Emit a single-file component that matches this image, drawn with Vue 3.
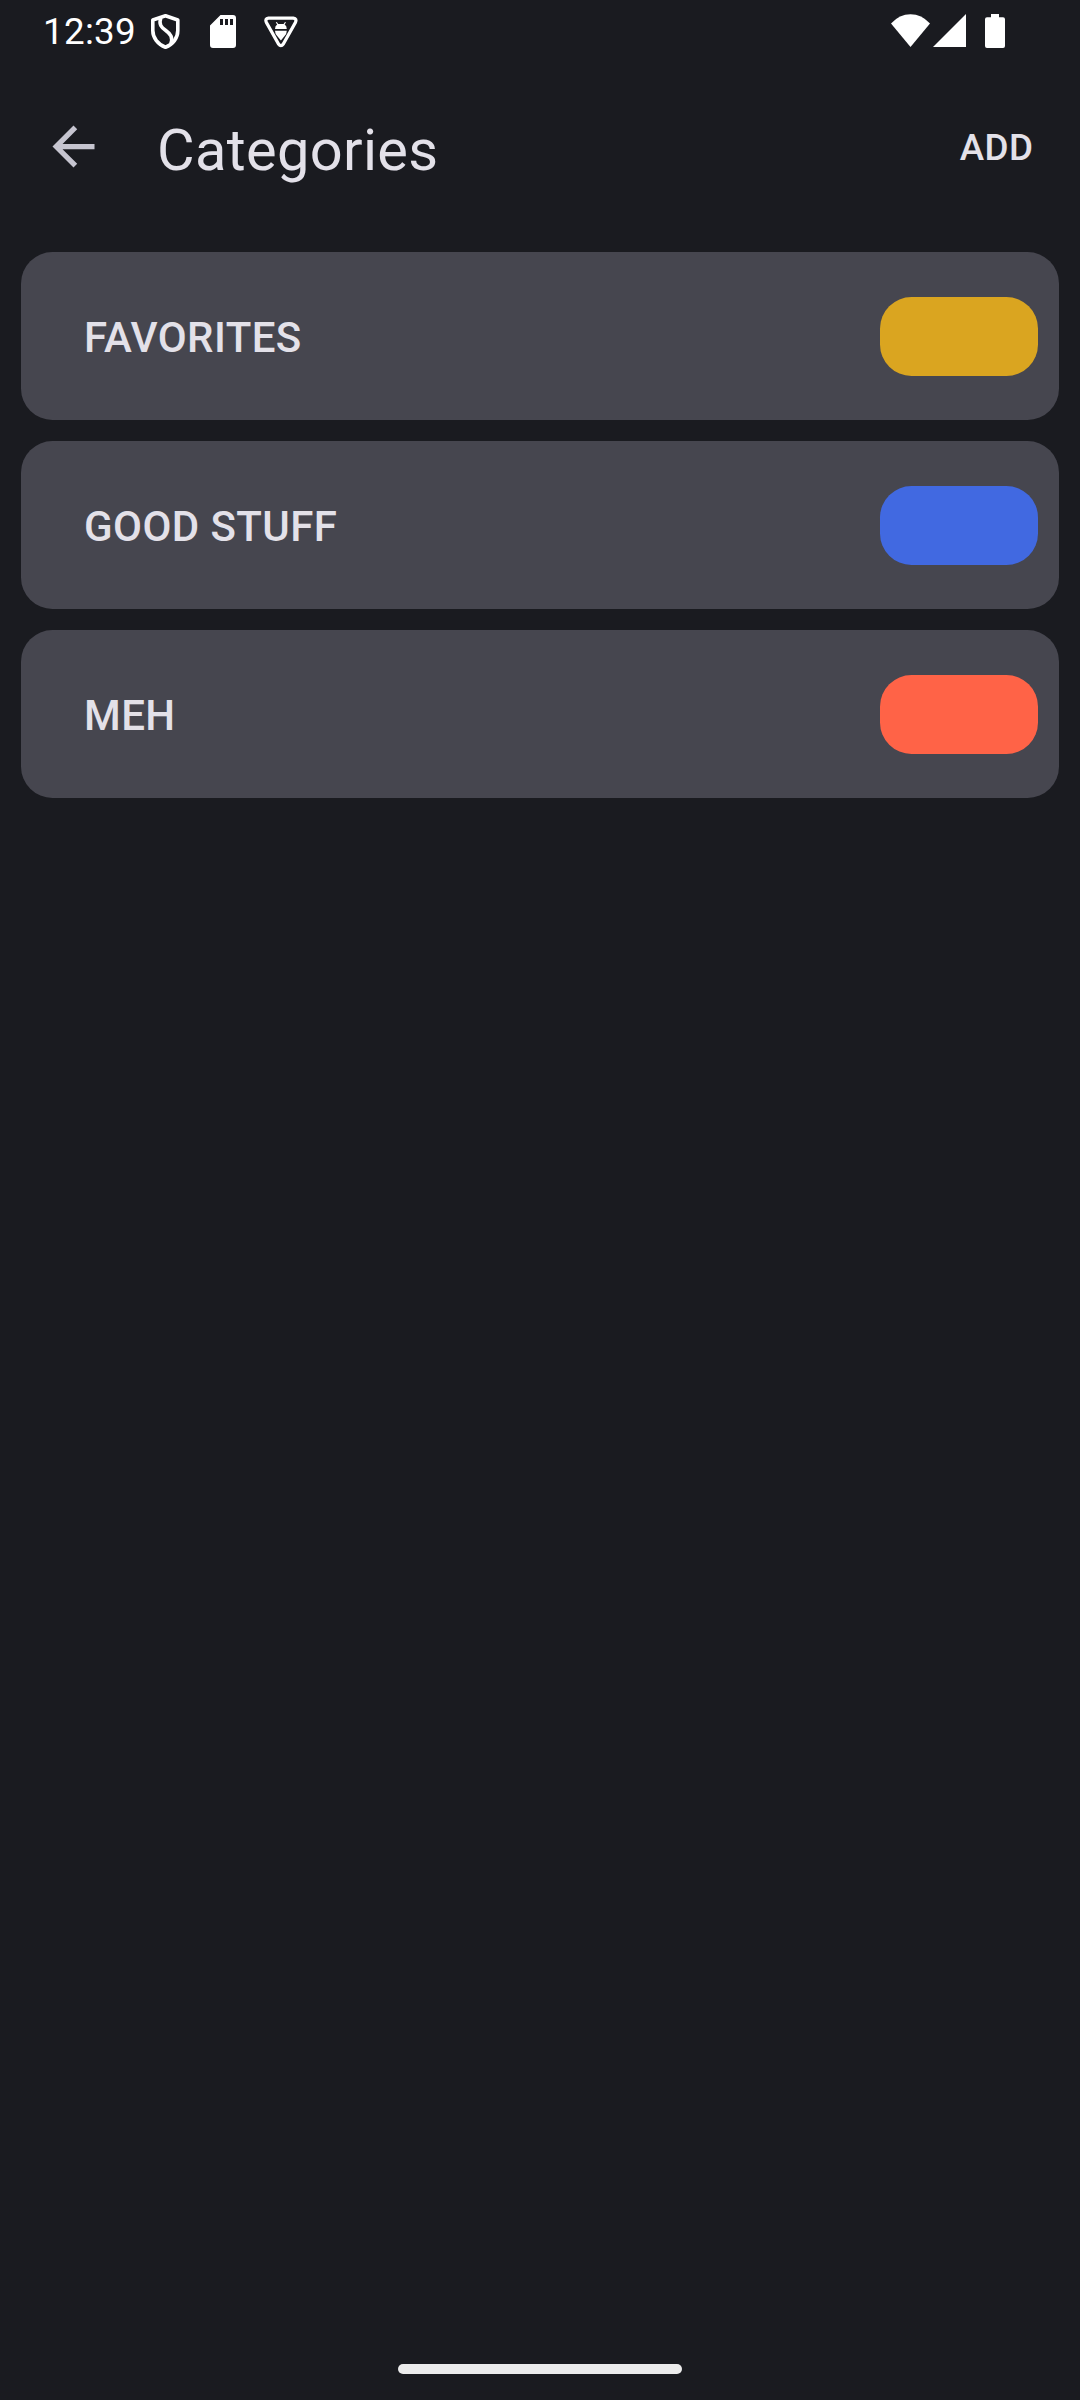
<script setup>
const categories = [
  { name: 'FAVORITES', color: '#daa520' },
  { name: 'GOOD STUFF', color: '#4169e1' },
  { name: 'MEH', color: '#ff6347' },
]
</script>

<template>
  <div class="screen">
    <header class="status">
      <span class="clock">12:39</span>
      <svg class="shield" width="32" height="38" viewBox="0 1 32 38" fill="none" stroke="#fff" stroke-width="3.6" stroke-linejoin="round">
        <path d="M15.5 2.8 L27.8 7 V17.5 C27.8 25 23 31.5 15.5 34.3 C8 31.5 2.8 25 2.8 17.5 V7 Z" />
        <path d="M10.8 5 C8.5 11.5 11.5 14.5 15.5 17.3 C20.5 21 23.3 24 20.8 31" />
      </svg>
      <svg class="sd" width="26" height="33" viewBox="0 0 26 33">
        <path fill="#fff" fill-rule="evenodd" d="M10.5 0 H23 Q26 0 26 3 V30 Q26 33 23 33 H3 Q0 33 0 30 V10.5 Z M10 4 V10 H13 V4 Z M15 4 V10 H18 V4 Z M20 4 V10 H23 V4 Z" />
      </svg>
      <svg class="tri" width="36" height="34" viewBox="0 0 36 34">
        <path fill="none" stroke="#fff" stroke-width="3.3" stroke-linejoin="round" d="M5.5 3.2 H30.3 Q34.2 3.8 32.4 7.5 L20.3 29 Q17.9 32.2 15.5 29 L3.4 7.5 Q1.6 3.8 5.5 3.2 Z" />
        <path fill="#fff" d="M12 14 Q12 10.8 14.2 9.5 L12.8 7.5 L13.8 7 L15.2 9 H20.6 L22 7 L23 7.5 L21.6 9.5 Q23.8 10.8 23.8 14 Z M12 15.7 H23.8 Q23.8 18.6 21.6 21 L17.9 25.6 L14.2 21 Q12 18.6 12 15.7 Z" />
      </svg>
      <span class="spacer"></span>
      <svg class="wifi" width="40" height="34" viewBox="0 0 40 34"><path fill="#fff" d="M0 9.5 Q8.5 0.3 19.5 0.3 Q30.5 0.3 39 9.5 L19.5 33 Z" /></svg>
      <svg class="cell" width="33" height="33" viewBox="0 0 33 33"><path fill="#fff" d="M33 0 V33 H0 Z" /></svg>
      <svg class="battery" width="20" height="34" viewBox="0 0 20 34"><path fill="#fff" d="M6 0 H14 V3.3 H18 Q20 3.3 20 5.3 V32 Q20 34 18 34 H2 Q0 34 0 32 V5.3 Q0 3.3 2 3.3 H6 Z" /></svg>
    </header>

    <nav class="toolbar">
      <svg class="back" width="63" height="63" viewBox="0 0 24 24"><path fill="#c6c5d0" d="M20 11H7.83l5.59-5.59L12 4l-8 8 8 8 1.41-1.41L7.83 13H20v-2z" /></svg>
      <h1 class="title">Categories</h1>
      <span class="spacer"></span>
      <button class="add">ADD</button>
    </nav>

    <main class="list">
      <div v-for="c in categories" :key="c.name" class="card">
        <span class="name">{{ c.name }}</span>
        <span class="swatch" :style="{ background: c.color }"></span>
      </div>
    </main>

    <footer class="gesture"><div class="handle"></div></footer>
  </div>
</template>

<style>
body { margin: 0; background: #1a1b20; }
</style>

<style scoped>
.screen {
  box-sizing: border-box;
  width: 1080px;
  height: 2400px;
  display: flex;
  flex-direction: column;
  background: #1a1b20;
  color: #e3e1e9;
  font-family: Roboto, sans-serif;
}
.spacer { flex: 1; }
.status {
  height: 63px;
  display: flex;
  align-items: flex-start;
  box-sizing: border-box;
  padding: 14px 75px 0 43px;
}
.status svg { flex: none; display: block; }
.clock {
  width: 107px;
  font-size: 36.75px;
  line-height: 35px;
  letter-spacing: 0.3px;
  color: #fff;
  white-space: nowrap;
}
.sd { margin: 1px 0 0 28px; }
.tri { margin: 1px 0 0 27px; }
.battery { margin-left: 19px; }
.cell { margin-left: 2px; }
.toolbar {
  height: 168px;
  display: flex;
  align-items: center;
  box-sizing: border-box;
  padding: 0 46.5px 0 42px;
}
.back { display: block; margin-top: -1px; }
.title {
  margin: 6px 0 0 52px;
  font-size: 57.75px;
  line-height: 68px;
  font-weight: 400;
  letter-spacing: 0.35px;
}
.add {
  margin: 2px 0 0;
  padding: 0;
  border: 0;
  background: none;
  color: inherit;
  font: 500 36.75px/44px Roboto, sans-serif;
  letter-spacing: 0.5px;
}
.list {
  flex: 1;
  display: flex;
  flex-direction: column;
  gap: 21px;
  padding: 21px 21px 0;
}
.card {
  height: 168px;
  display: flex;
  align-items: center;
  justify-content: space-between;
  box-sizing: border-box;
  padding: 1px 21px 0 63px;
  border-radius: 31.5px;
  background: #46464f;
}
.name {
  padding-top: 2px;
  font-size: 42px;
  font-weight: 500;
  line-height: 50px;
  letter-spacing: 0.42px;
}
.swatch {
  width: 158px;
  height: 79px;
  border-radius: 31.5px;
}
.gesture {
  height: 36px;
  display: flex;
  justify-content: center;
}
.handle {
  width: 284px;
  height: 10px;
  border-radius: 5px;
  background: #ececec;
}
</style>
